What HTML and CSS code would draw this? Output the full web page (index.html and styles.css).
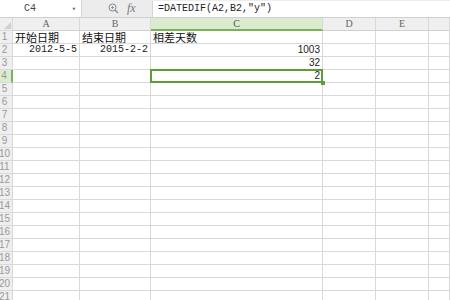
FILE: index.html
```html
<!DOCTYPE html>
<html lang="zh-CN">
<head>
  <meta charset="UTF-8">
  <title>DATEDIF</title>
  <link rel="stylesheet" href="styles.css">
</head>
<body>
  <div class="formula-bar">
    <div class="name-box"><span class="ref">C4</span><span class="caret">&#9662;</span></div>
    <div class="tools">
      <svg class="zoom-icon" width="11" height="11" viewBox="0 0 11 11">
        <circle cx="4.5" cy="4.5" r="3.5" fill="none" stroke="#888" stroke-width="1"/>
        <line x1="7" y1="7" x2="10" y2="10" stroke="#888" stroke-width="1.3"/>
        <line x1="4.5" y1="3" x2="4.5" y2="6" stroke="#888" stroke-width="0.8"/>
        <line x1="3" y1="4.5" x2="6" y2="4.5" stroke="#888" stroke-width="0.8"/>
      </svg>
      <span class="fx">fx</span>
    </div>
    <div class="formula">=DATEDIF(A2,B2,"y")</div>
  </div>

  <div class="sheet">
    <div class="row head">
      <div class="cell corner"><span class="tri"></span></div>
      <div class="cell col">A</div><div class="cell col">B</div><div class="cell col active">C</div>
      <div class="cell col">D</div><div class="cell col">E</div><div class="cell col"></div>
    </div>
    <div class="row">
      <div class="cell num">1</div>
      <div class="cell cn">开始日期</div><div class="cell cn">结束日期</div><div class="cell cn">相差天数</div>
      <div class="cell"></div><div class="cell"></div><div class="cell"></div>
    </div>
    <div class="row">
      <div class="cell num">2</div>
      <div class="cell date">2012-5-5</div><div class="cell date">2015-2-2</div><div class="cell val">1003</div>
      <div class="cell"></div><div class="cell"></div><div class="cell"></div>
    </div>
    <div class="row">
      <div class="cell num">3</div>
      <div class="cell"></div><div class="cell"></div><div class="cell val">32</div>
      <div class="cell"></div><div class="cell"></div><div class="cell"></div>
    </div>
    <div class="row">
      <div class="cell num active">4</div>
      <div class="cell"></div><div class="cell"></div><div class="cell val selected">2</div>
      <div class="cell"></div><div class="cell"></div><div class="cell"></div>
    </div>
    <div class="row"><div class="cell num">5</div><div class="cell"></div><div class="cell"></div><div class="cell"></div><div class="cell"></div><div class="cell"></div><div class="cell"></div></div>
    <div class="row"><div class="cell num">6</div><div class="cell"></div><div class="cell"></div><div class="cell"></div><div class="cell"></div><div class="cell"></div><div class="cell"></div></div>
    <div class="row"><div class="cell num">7</div><div class="cell"></div><div class="cell"></div><div class="cell"></div><div class="cell"></div><div class="cell"></div><div class="cell"></div></div>
    <div class="row"><div class="cell num">8</div><div class="cell"></div><div class="cell"></div><div class="cell"></div><div class="cell"></div><div class="cell"></div><div class="cell"></div></div>
    <div class="row"><div class="cell num">9</div><div class="cell"></div><div class="cell"></div><div class="cell"></div><div class="cell"></div><div class="cell"></div><div class="cell"></div></div>
    <div class="row"><div class="cell num">10</div><div class="cell"></div><div class="cell"></div><div class="cell"></div><div class="cell"></div><div class="cell"></div><div class="cell"></div></div>
    <div class="row"><div class="cell num">11</div><div class="cell"></div><div class="cell"></div><div class="cell"></div><div class="cell"></div><div class="cell"></div><div class="cell"></div></div>
    <div class="row"><div class="cell num">12</div><div class="cell"></div><div class="cell"></div><div class="cell"></div><div class="cell"></div><div class="cell"></div><div class="cell"></div></div>
    <div class="row"><div class="cell num">13</div><div class="cell"></div><div class="cell"></div><div class="cell"></div><div class="cell"></div><div class="cell"></div><div class="cell"></div></div>
    <div class="row"><div class="cell num">14</div><div class="cell"></div><div class="cell"></div><div class="cell"></div><div class="cell"></div><div class="cell"></div><div class="cell"></div></div>
    <div class="row"><div class="cell num">15</div><div class="cell"></div><div class="cell"></div><div class="cell"></div><div class="cell"></div><div class="cell"></div><div class="cell"></div></div>
    <div class="row"><div class="cell num">16</div><div class="cell"></div><div class="cell"></div><div class="cell"></div><div class="cell"></div><div class="cell"></div><div class="cell"></div></div>
    <div class="row"><div class="cell num">17</div><div class="cell"></div><div class="cell"></div><div class="cell"></div><div class="cell"></div><div class="cell"></div><div class="cell"></div></div>
    <div class="row"><div class="cell num">18</div><div class="cell"></div><div class="cell"></div><div class="cell"></div><div class="cell"></div><div class="cell"></div><div class="cell"></div></div>
    <div class="row"><div class="cell num">19</div><div class="cell"></div><div class="cell"></div><div class="cell"></div><div class="cell"></div><div class="cell"></div><div class="cell"></div></div>
    <div class="row"><div class="cell num">20</div><div class="cell"></div><div class="cell"></div><div class="cell"></div><div class="cell"></div><div class="cell"></div><div class="cell"></div></div>
    <div class="row"><div class="cell num">21</div><div class="cell"></div><div class="cell"></div><div class="cell"></div><div class="cell"></div><div class="cell"></div><div class="cell"></div></div>
  </div>
</body>
</html>
```

FILE: styles.css
```css
body{
  margin:0;
  width:450px;
  height:300px;
  overflow:hidden;
  background:white;
  font-family:"Liberation Sans", "Noto Sans CJK SC", sans-serif;
  color:#222;
}
.formula-bar{
  display:flex;
  height:18px;
  box-sizing:border-box;
  border-bottom:1px solid #d0d0d0;
  background:#ececec;
}
.name-box{
  width:82px;
  display:flex;
  align-items:center;
  justify-content:space-between;
  padding:0 5px 0 24px;
  box-sizing:border-box;
  background:white;
  border-right:1px solid #d4d4d4;
  font-family:"Liberation Mono", monospace;
  font-size:10px;
  color:#444;
}
.caret{
  font-size:7px;
  color:#666;
}
.tools{
  width:70px;
  display:flex;
  align-items:center;
  padding-left:26px;
  gap:8px;
  box-sizing:border-box;
}
.fx{
  font-family:"Liberation Serif", serif;
  font-style:italic;
  font-size:12px;
  color:#777;
}
.formula{
  flex:1;
  background:white;
  border-left:1px solid #d4d4d4;
  margin-top:1px;
  padding-left:5px;
  font-family:"Liberation Mono", monospace;
  font-size:10px;
  line-height:16px;
  color:#222;
}
.sheet{
  display:flex;
  flex-direction:column;
}
.row{
  display:grid;
  grid-template-columns:13px 67px 71px 172px 53px 53px 21px;
  height:13px;
}
.row.head{
  height:13px;
  background:#efefef;
}
.cell{
  box-sizing:border-box;
  border-right:1px solid #d9d9d9;
  border-bottom:1px solid #d9d9d9;
  font-size:11px;
  line-height:12px;
  white-space:nowrap;
  overflow:hidden;
  padding:0 2px;
}
.corner{
  position:relative;
  background:#efefef;
}
.tri{
  position:absolute;
  right:1px;
  bottom:1px;
  border-left:7px solid transparent;
  border-bottom:7px solid #d0d0d0;
}
.col{
  text-align:center;
  font-family:"Liberation Serif", serif;
  font-size:10px;
  color:#666;
  border-bottom-color:#cfcfcf;
}
.col.active{
  background:#dcebd0;
  border-bottom:2px solid #7cb35a;
  color:#555;
}
.num{
  background:#efefef;
  color:#999;
  font-size:10px;
  text-align:center;
  padding:0;
  text-indent:-3px;
}
.num.active{
  background:#dcebd0;
  border-right:2px solid #7cb35a;
}
.cn{
  font-family:"Noto Sans CJK SC", sans-serif;
  font-size:11px;
  line-height:12px;
  overflow:visible;
  color:#111;
}
.date{
  text-align:right;
  font-family:"Liberation Mono", monospace;
  font-size:10px;
  color:#222;
}
.val{
  text-align:right;
  font-size:10px;
  color:#222;
}
.selected{
  position:relative;
  overflow:visible;
}
.selected::after{
  content:'';
  position:absolute;
  left:-1px;
  top:-1px;
  right:-1px;
  bottom:-1px;
  border:2px solid #5e9c3c;
}
.selected::before{
  content:'';
  position:absolute;
  right:-3px;
  bottom:-3px;
  width:4px;
  height:4px;
  background:#5e9c3c;
  z-index:1;
}
```
